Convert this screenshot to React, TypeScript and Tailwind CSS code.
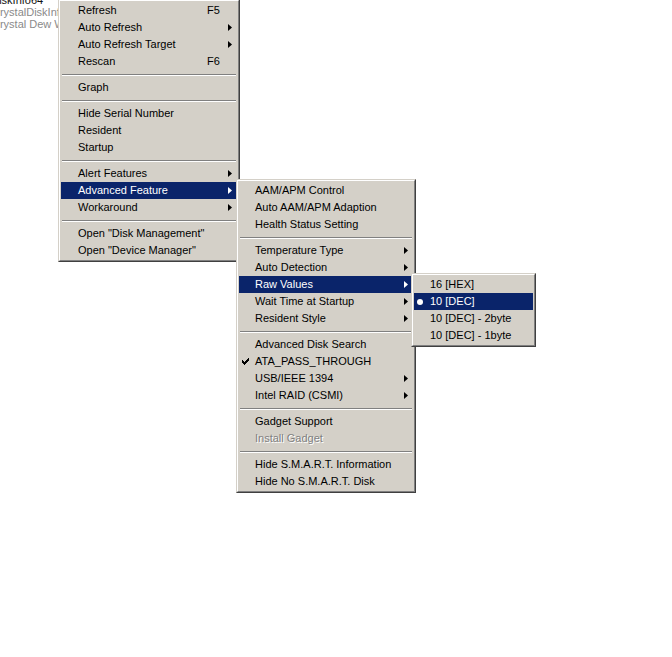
import React from "react";

type Item =
  | { sep: true }
  | {
      sep?: false;
      label: string;
      shortcut?: string;
      sub?: boolean;
      active?: boolean;
      disabled?: boolean;
      mark?: "check" | "dot";
    };

const MAIN: Item[] = [
  { label: "Refresh", shortcut: "F5" },
  { label: "Auto Refresh", sub: true },
  { label: "Auto Refresh Target", sub: true },
  { label: "Rescan", shortcut: "F6" },
  { sep: true },
  { label: "Graph" },
  { sep: true },
  { label: "Hide Serial Number" },
  { label: "Resident" },
  { label: "Startup" },
  { sep: true },
  { label: "Alert Features", sub: true },
  { label: "Advanced Feature", sub: true, active: true },
  { label: "Workaround", sub: true },
  { sep: true },
  { label: 'Open "Disk Management"' },
  { label: 'Open "Device Manager"' },
];

const ADVANCED: Item[] = [
  { label: "AAM/APM Control" },
  { label: "Auto AAM/APM Adaption" },
  { label: "Health Status Setting" },
  { sep: true },
  { label: "Temperature Type", sub: true },
  { label: "Auto Detection", sub: true },
  { label: "Raw Values", sub: true, active: true },
  { label: "Wait Time at Startup", sub: true },
  { label: "Resident Style", sub: true },
  { sep: true },
  { label: "Advanced Disk Search" },
  { label: "ATA_PASS_THROUGH", mark: "check" },
  { label: "USB/IEEE 1394", sub: true },
  { label: "Intel RAID (CSMI)", sub: true },
  { sep: true },
  { label: "Gadget Support" },
  { label: "Install Gadget", disabled: true },
  { sep: true },
  { label: "Hide S.M.A.R.T. Information" },
  { label: "Hide No S.M.A.R.T. Disk" },
];

const RAW: Item[] = [
  { label: "16 [HEX]" },
  { label: "10 [DEC]", active: true, mark: "dot" },
  { label: "10 [DEC] - 2byte" },
  { label: "10 [DEC] - 1byte" },
];

function Arrow({ color }: { color: string }) {
  return (
    <svg width="4" height="7" viewBox="0 0 4 7" className="block">
      <path d="M0 0 L4 3.5 L0 7 Z" fill={color} />
    </svg>
  );
}

function Check({ color }: { color: string }) {
  return (
    <svg width="7" height="7" viewBox="0 0 7 7" className="block" shapeRendering="crispEdges">
      <path
        d="M0 2h1v1h1v1h1V3h1V2h1V1h1V0h1v3H6v1H5v1H4v1H3v1H2V6H1V5H0Z"
        fill={color}
      />
    </svg>
  );
}

function Dot({ color }: { color: string }) {
  return (
    <svg width="6" height="6" viewBox="0 0 6 6" className="block">
      <circle cx="3" cy="3" r="3" fill={color} />
    </svg>
  );
}

function Menu({ items, lead }: { items: Item[]; lead: string }) {
  return (
    <div className="border border-t-[#d4d0c8] border-l-[#d4d0c8] border-r-[#404040] border-b-[#404040] bg-[#d4d0c8]">
      <div className="border border-t-white border-l-white border-r-[#808080] border-b-[#808080] p-px">
        {items.map((it, i) => {
          if (it.sep) {
            return (
              <div key={i} className="flex h-[9px] flex-col justify-center px-px">
                <div className="h-px bg-[#808080]" />
                <div className="h-px bg-white" />
              </div>
            );
          }
          const fg = it.active ? "#ffffff" : "#000000";
          return (
            <div
              key={i}
              className={
                "flex h-[17px] items-stretch " +
                (it.active ? "bg-[#0a246a] text-white" : "text-black")
              }
            >
              <div className={"flex shrink-0 items-center pl-[3px] " + lead}>
                {it.mark === "check" && <Check color={fg} />}
                {it.mark === "dot" && <Dot color={fg} />}
              </div>
              <span
                className={
                  "flex-1 whitespace-nowrap pt-[2px] leading-[12px] " +
                  (it.disabled ? "text-[#808080] [text-shadow:1px_1px_0_#ffffff]" : "")
                }
              >
                {it.label}
              </span>
              <div className="flex w-[30px] shrink-0 items-center justify-end pr-[5px]">
                {it.shortcut && (
                  <span className="mr-auto self-start pt-[2px] leading-[12px]">{it.shortcut}</span>
                )}
                {it.sub && <Arrow color={fg} />}
              </div>
            </div>
          );
        })}
      </div>
    </div>
  );
}

export default function App() {
  return (
    <div
      className="relative h-[657px] w-[672px] overflow-hidden bg-white text-[11px] leading-[12px]"
      style={{ fontFamily: '"Liberation Sans", Arial, sans-serif' }}
    >
      {/* window text behind the popup */}
      <div className="ml-[-8px] mt-[-6px] flex flex-col">
        <span className="ml-[-35px] text-[#111111]">CrystalDiskInfo64</span>
        <span className="text-[#8a8a8a]">CrystalDiskInfo</span>
        <span className="text-[#8a8a8a]">Crystal Dew World</span>
      </div>

      <div className="absolute left-[58px] top-[-1px] w-[182px]">
        <Menu items={MAIN} lead="w-[17px]" />
      </div>
      <div className="absolute left-[236px] top-[179px] w-[180px]">
        <Menu items={ADVANCED} lead="w-[16px]" />
      </div>
      <div className="absolute left-[411px] top-[273px] w-[125px]">
        <Menu items={RAW} lead="w-[16px]" />
      </div>
    </div>
  );
}
